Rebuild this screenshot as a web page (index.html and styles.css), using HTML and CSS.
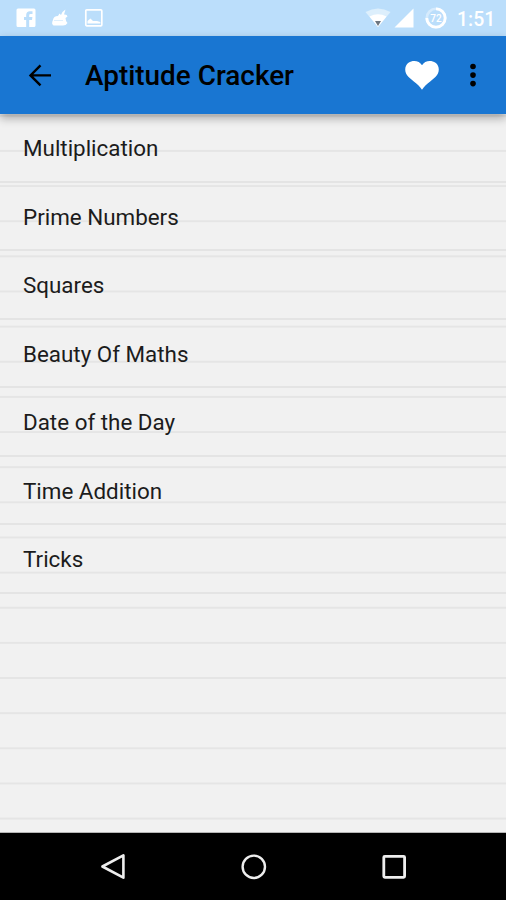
FILE: index.html
```html
<!DOCTYPE html>
<html lang="en">
<head>
    <meta charset="UTF-8">
    <meta name="viewport" content="width=device-width, initial-scale=1.0">
    <title>Aptitude Cracker</title>
    <link rel="stylesheet" href="styles.css">
</head>
<body>
<div class="status-bar">
    <div class="notifications">
        <svg width="20" height="20" viewBox="0 0 20 20">
            <path fill="#fff" d="M2 0.5H18Q19.5 0.5 19.5 2V17.5Q19.5 19 18 19H13.2V12H16L16.4 9H13.2V7.2Q13.2 6 14.5 6H16.5V3.2H14Q10.2 3.2 10.2 7V9H8V12H10.2V19H2Q0.5 19 0.5 17.5V2Q0.5 0.5 2 0.5Z"/>
        </svg>
        <svg width="20" height="20" viewBox="0 0 20 20">
            <path fill="#fff" d="M3 12Q3.5 8 8 8L9.5 5.5L11 7Q12 3.5 15.5 1.5L14 6.5Q17 6 17.5 8.5L15.5 10Q15.5 13 17.5 15Q16 17.5 13 17.5H3.5Q1 16 3 12Z"/>
            <path stroke="#d6ebfd" stroke-width="0.8" d="M4 12.5H13"/>
        </svg>
        <svg width="20" height="20" viewBox="0 0 20 20">
            <rect x="1.8" y="1.8" width="16" height="16" rx="1" fill="none" stroke="#fff" stroke-width="1.7"/>
            <path fill="#fff" d="M3.5 13L6.5 10.5L9 13H13L16.3 14V15.5H3.5Z"/>
        </svg>
    </div>
    <div class="indicators">
        <svg class="wifi" width="26" height="20" viewBox="0 0 26 20">
            <path fill="#ddeffc" d="M0.5 4Q13 -3 25.5 4L13 19Z"/>
            <path fill="#fff" d="M4.5 8.5Q13 4 21.5 8.5L13 19Z"/>
            <path fill="#6d7680" d="M10 13H16L13 18Z"/>
        </svg>
        <svg class="signal" width="20" height="20" viewBox="0 0 20 20">
            <path fill="#fff" d="M19.5 0.5V19.5H0.5Z"/>
        </svg>
        <svg class="battery" width="22" height="22" viewBox="0 0 22 22">
            <circle cx="11" cy="11" r="9.2" fill="none" stroke="#d6ebfd" stroke-width="2.6"/>
            <path fill="none" stroke="#fff" stroke-width="2.8" d="M11 1.8A9.2 9.2 0 1 1 1.8 11"/>
            <text x="11" y="14.6" text-anchor="middle">72</text>
        </svg>
        <span class="clock">1:51</span>
    </div>
</div>

<div class="toolbar">
    <svg class="back" width="24" height="24" viewBox="0 0 24 24">
        <path fill="none" stroke="#000" stroke-width="2.4" d="M23 12.4H2.5M12.5 2.4L2.5 12.4L12.5 22.4"/>
    </svg>
    <h1>Aptitude Cracker</h1>
    <svg class="heart" width="34" height="30" viewBox="0 0 34 30">
        <path fill="#fff" d="M17 29.7C15 26.5 12 24 8.5 21.2L3.6 17C-1 12.5 -0.8 6 3.5 2.8C8 -0.5 14.5 0.8 17 5.2C19.5 0.8 26 -0.5 30.5 2.8C34.8 6 35 12.5 30.4 17L25.5 21.2C22 24 19 26.5 17 29.7Z"/>
    </svg>
    <svg class="more" width="6" height="24" viewBox="0 0 6 24">
        <circle cx="3" cy="3.5" r="2.8"/>
        <circle cx="3" cy="12.1" r="2.8"/>
        <circle cx="3" cy="20.6" r="2.8"/>
    </svg>
</div>

<ul class="topics">
    <li>Multiplication</li>
    <li>Prime Numbers</li>
    <li>Squares</li>
    <li>Beauty Of Maths</li>
    <li>Date of the Day</li>
    <li>Time Addition</li>
    <li>Tricks</li>
</ul>

<div class="nav-bar">
    <svg width="28" height="28" viewBox="0 0 28 28">
        <path fill="none" stroke="#eee" stroke-width="2.6" stroke-linejoin="round" d="M24.4 2.3V24.7L3.4 13.5Z"/>
    </svg>
    <svg width="28" height="28" viewBox="0 0 28 28">
        <circle cx="13.8" cy="13.8" r="11.2" fill="none" stroke="#eee" stroke-width="2.4"/>
    </svg>
    <svg width="28" height="28" viewBox="0 0 28 28">
        <rect x="3.8" y="3.3" width="20.8" height="21" rx="1" fill="none" stroke="#eee" stroke-width="2.8"/>
    </svg>
</div>
</body>
</html>
```
FILE: styles.css
```css
body {
    margin: 0;
    height: 900px;
    display: flex;
    flex-direction: column;
    overflow: hidden;
    background-color: #f1f1f1;
    font-family: Roboto, sans-serif;
}

svg {
    display: block;
    flex-shrink: 0;
}

/* Status bar */
.status-bar {
    height: 36px;
    flex-shrink: 0;
    display: flex;
    justify-content: space-between;
    align-items: center;
    box-sizing: border-box;
    padding: 0 11px 0 16px;
    background-color: #bbdefb;
}

.notifications {
    display: flex;
    gap: 14px;
}

.indicators {
    display: flex;
    align-items: center;
}

.signal {
    margin-left: 3px;
}

.battery {
    margin-left: 11px;
}

.battery text {
    fill: #fff;
    font-size: 10px;
    font-weight: 500;
}

.clock {
    width: 38px;
    margin-left: 10px;
    padding-top: 3px;
    color: #fff;
    font-size: 19.4px;
    font-weight: 500;
    line-height: 33px;
    white-space: nowrap;
}

/* Toolbar */
.toolbar {
    position: relative;
    height: 78px;
    flex-shrink: 0;
    display: flex;
    align-items: center;
    box-sizing: border-box;
    padding: 0 30px 0 28px;
    background-color: #1976d2;
    box-shadow: 0 4px 9px rgba(0, 0, 0, 0.32);
}

h1 {
    margin: 0 auto 0 33px;
    font-size: 27.9px;
    font-weight: 500;
    line-height: 36px;
    padding-top: 2px;
}

.heart {
    margin-right: 31px;
}

/* List on ruled paper */
.topics {
    flex: 1;
    margin: 0;
    padding: 0;
    list-style: none;
    border-bottom: 1px solid #b5b5b5;
    background-image: linear-gradient(#e5e5e5 2px, transparent 2px);
    background-size: 100% 35.15px;
    background-position: 0 0.8px;
}

.topics li {
    height: 68.55px;
    box-sizing: border-box;
    padding-left: 23px;
    border-bottom: 2px solid #e4e4e4;
    color: #1c1c1c;
    font-size: 22.4px;
    line-height: 69.6px;
}

/* Navigation buttons */
.nav-bar {
    height: 67px;
    flex-shrink: 0;
    display: flex;
    justify-content: space-between;
    align-items: center;
    box-sizing: border-box;
    padding: 0 98px 0 99px;
    background-color: #000;
}
```
